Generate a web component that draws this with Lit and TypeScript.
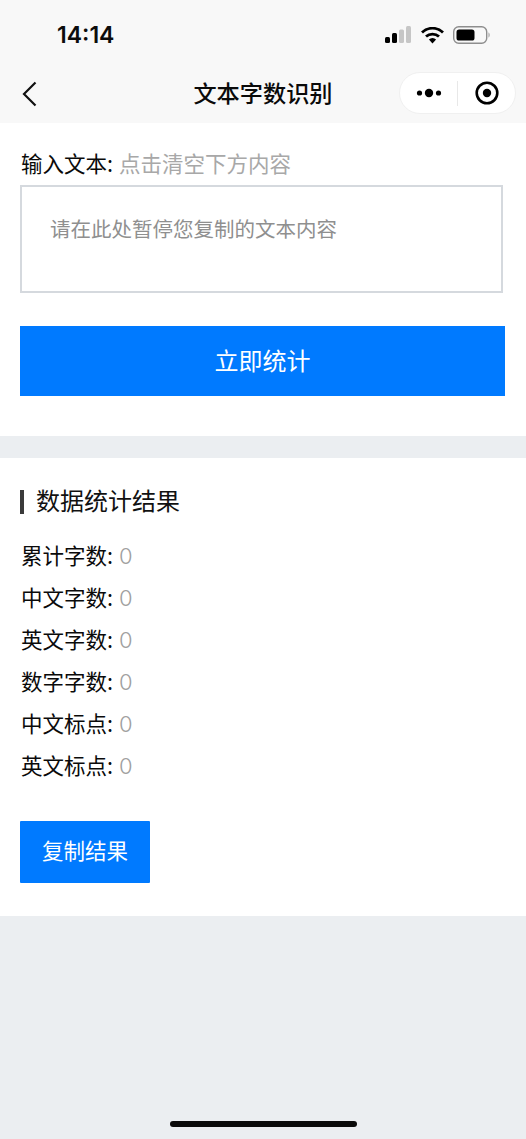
import { LitElement, html, css } from "lit";
import { customElement } from "lit/decorators.js";

@customElement("app-root")
export class AppRoot extends LitElement {
  static styles = css`
    :host {
      display: flex;
      flex-direction: column;
      width: 526px;
      height: 1139px;
      background: #ebeef1;
      font-family: "Noto Sans CJK SC", "Inter", sans-serif;
      color: #0a0a0a;
      position: relative;
      overflow: hidden;
    }
    .top { background: #f8f8f8; height: 123px; display: flex; flex-direction: column; }
    .status { height: 64px; display: flex; align-items: center; padding: 6px 35px 0 57px; box-sizing: border-box; justify-content: space-between; }
    .time { font-family: "Inter", sans-serif; font-weight: 600; font-size: 23px; line-height: 1; color: #0c0c0c; }
    .status-icons { display: flex; align-items: center; gap: 9px; }
    .nav { height: 59px; display: grid; grid-template-columns: 1fr auto 1fr; align-items: center; padding: 0 10px; box-sizing: border-box; }
    .back { display: block; margin-left: 12px; }
    .title { font-size: 23.2px; font-weight: 500; line-height: 32px; color: #0a0a0a; padding-bottom: 4px; }
    .capsule { justify-self: end; width: 117px; height: 42px; border-radius: 21px; background: #fff; border: 1px solid #f0f0f0; box-sizing: border-box; display: flex; align-items: center; margin-top: -1px; }
    .capsule .side { flex: 1; display: flex; align-items: center; justify-content: center; }
    .capsule .div { width: 1px; height: 25px; background: #e8e8e8; }
    .card { background: #fff; padding: 0 20px; }
    .input-card { height: 313px; box-sizing: border-box; padding-top: 24px; }
    .label { font-size: 21.5px; line-height: 31px; display: flex; gap: 6px; padding-left: 1px; }
    .hint { color: #a8a8a8; }
    .box { margin-top: 7px; width: 483px; height: 108px; box-sizing: border-box; border: 2px solid #d5d9de; padding: 26px 28px; font-size: 20.5px; line-height: 30px; color: #8f8f8f; }
    .primary { margin-top: 33px; width: 485px; height: 70px; box-sizing: border-box; padding-bottom: 4px; background: #007aff; color: #fff; font-size: 24px; display: flex; align-items: center; justify-content: center; }
    .result-card { margin-top: 22px; height: 458px; box-sizing: border-box; padding-top: 24px; }
    .section { display: flex; align-items: center; gap: 12px; font-size: 24px; line-height: 35px; color: #111; }
    .section i { width: 4px; height: 24px; background: #3a3a3a; display: block; }
    .section span { padding-bottom: 4px; }
    .rows { margin-top: 18px; display: flex; flex-direction: column; gap: 11px; padding-left: 1px; }
    .row { font-size: 21.5px; line-height: 31px; height: 31px; display: flex; gap: 6px; }
    .num { font-family: "Inter", sans-serif; font-weight: 300; color: #a0a0a0; font-size: 22px; line-height: 31px; margin-top: 2px; }
    .copy { margin-top: 41px; width: 130px; height: 62px; box-sizing: border-box; padding-bottom: 5px; background: #007aff; color: #fff; font-size: 21.5px; display: flex; align-items: center; justify-content: center; border-radius: 1px; }
    .home { position: absolute; left: 170px; top: 1121px; width: 187px; height: 6px; border-radius: 3px; background: #0a0a0a; }
  `;

  render() {
    const rows = ["累计字数", "中文字数", "英文字数", "数字字数", "中文标点", "英文标点"];
    return html`
      <div class="top">
        <div class="status">
          <span class="time">14:14</span>
          <div class="status-icons">
            <svg width="27" height="18" viewBox="0 0 27 18">
              <rect x="0" y="11" width="5" height="6" rx="1.5" fill="#000"/>
              <rect x="7" y="7" width="5" height="10" rx="1.5" fill="#000"/>
              <rect x="14" y="3.5" width="5" height="13.5" rx="1.5" fill="#c6c6c6"/>
              <rect x="21" y="0" width="5" height="17" rx="1.5" fill="#c6c6c6"/>
            </svg>
            <svg width="23" height="17" viewBox="0 0 23 17">
              <path d="M1 5.5 A15 15 0 0 1 22 5.5" fill="none" stroke="#000" stroke-width="2.8"/>
              <path d="M5 9.6 A9.5 9.5 0 0 1 18 9.6" fill="none" stroke="#000" stroke-width="2.8"/>
              <path d="M7.9 12.6 L11.5 16.6 L15.1 12.6 A5 5 0 0 0 7.9 12.6 Z" fill="#000"/>
            </svg>
            <svg width="38" height="18" viewBox="0 0 38 18">
              <rect x="0.7" y="0.7" width="33" height="16.6" rx="5" fill="none" stroke="#8e8e8e" stroke-width="1.4"/>
              <rect x="3.5" y="3.5" width="18" height="11" rx="2.6" fill="#000"/>
              <path d="M35.5 6.5 C37 7 37 11 35.5 11.5 Z" fill="#9a9a9a"/>
            </svg>
          </div>
        </div>
        <div class="nav">
          <svg class="back" width="16" height="26" viewBox="0 0 16 26">
            <path d="M13.5 1.5 L2 13 L13.5 24.5" fill="none" stroke="#111" stroke-width="2.2"/>
          </svg>
          <div class="title">文本字数识别</div>
          <div class="capsule">
            <div class="side">
              <svg width="26" height="10" viewBox="0 0 26 10">
                <circle cx="3.5" cy="5" r="2.6" fill="#000"/>
                <circle cx="13" cy="5" r="4.2" fill="#000"/>
                <circle cx="22.5" cy="5" r="2.6" fill="#000"/>
              </svg>
            </div>
            <div class="div"></div>
            <div class="side">
              <svg width="24" height="24" viewBox="0 0 24 24">
                <circle cx="12" cy="12" r="10.3" fill="none" stroke="#000" stroke-width="2.6"/>
                <circle cx="12" cy="12" r="4.2" fill="#000"/>
              </svg>
            </div>
          </div>
        </div>
      </div>
      <div class="card input-card">
        <div class="label"><span>输入文本:</span><span class="hint">点击清空下方内容</span></div>
        <div class="box">请在此处暂停您复制的文本内容</div>
        <div class="primary">立即统计</div>
      </div>
      <div class="card result-card">
        <div class="section"><i></i><span>数据统计结果</span></div>
        <div class="rows">
          ${rows.map((r) => html`<div class="row"><span>${r}:</span><span class="num">0</span></div>`)}
        </div>
        <div class="copy">复制结果</div>
      </div>
      <div class="home"></div>
    `;
  }
}
